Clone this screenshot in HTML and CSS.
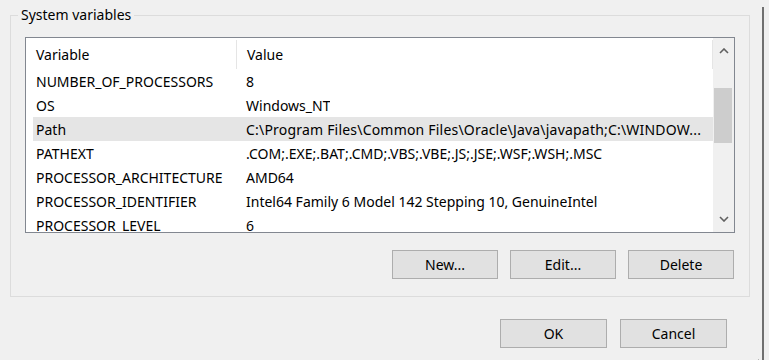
FILE: index.html
```html
<!DOCTYPE html>
<html lang="en">

<head>
    <meta charset="UTF-8">
    <title>Environment Variables</title>
    <link rel="stylesheet" href="styles.css">
</head>

<body>
    <div class="window">
        <fieldset class="group">
            <legend>System variables</legend>

            <div class="listbox">
                <div class="list-body">
                    <div class="list-header">
                        <div class="col col-name">Variable</div>
                        <div class="col col-value">Value</div>
                    </div>
                    <div class="row">
                        <div class="col col-name">NUMBER_OF_PROCESSORS</div>
                        <div class="col col-value">8</div>
                    </div>
                    <div class="row">
                        <div class="col col-name">OS</div>
                        <div class="col col-value">Windows_NT</div>
                    </div>
                    <div class="row selected">
                        <div class="col col-name">Path</div>
                        <div class="col col-value path-value">C:\Program Files\Common Files\Oracle\Java\javapath;C:\WINDOW...</div>
                    </div>
                    <div class="row">
                        <div class="col col-name">PATHEXT</div>
                        <div class="col col-value">.COM;.EXE;.BAT;.CMD;.VBS;.VBE;.JS;.JSE;.WSF;.WSH;.MSC</div>
                    </div>
                    <div class="row">
                        <div class="col col-name">PROCESSOR_ARCHITECTURE</div>
                        <div class="col col-value">AMD64</div>
                    </div>
                    <div class="row">
                        <div class="col col-name">PROCESSOR_IDENTIFIER</div>
                        <div class="col col-value">Intel64 Family 6 Model 142 Stepping 10, GenuineIntel</div>
                    </div>
                    <div class="row">
                        <div class="col col-name">PROCESSOR_LEVEL</div>
                        <div class="col col-value">6</div>
                    </div>
                </div>

                <div class="scrollbar">
                    <div class="arrow">
                        <svg width="10" height="6" viewBox="0 0 10 6"><path d="M1 5 L5 1 L9 5" fill="none" stroke="#606060" stroke-width="1.6"/></svg>
                    </div>
                    <div class="track">
                        <div class="thumb"></div>
                    </div>
                    <div class="arrow">
                        <svg width="10" height="6" viewBox="0 0 10 6"><path d="M1 1 L5 5 L9 1" fill="none" stroke="#606060" stroke-width="1.6"/></svg>
                    </div>
                </div>
            </div>

            <div class="actions">
                <button>New...</button>
                <button>Edit...</button>
                <button>Delete</button>
            </div>
        </fieldset>

        <div class="footer">
            <button>OK</button>
            <button>Cancel</button>
        </div>

        <svg class="grip" width="6" height="6" viewBox="0 0 6 6">
            <rect x="4" y="0" width="1" height="1" fill="#b5b5b5"/>
            <rect x="2" y="2" width="1" height="1" fill="#b5b5b5"/>
            <rect x="4" y="2" width="1" height="1" fill="#b5b5b5"/>
            <rect x="0" y="4" width="1" height="1" fill="#b5b5b5"/>
            <rect x="2" y="4" width="1" height="1" fill="#b5b5b5"/>
            <rect x="4" y="4" width="1" height="1" fill="#b5b5b5"/>
        </svg>
    </div>
</body>

</html>
```

FILE: styles.css
```css
body {
    margin: 0;
    background-color: #f0f0f0;
    font-family: "Segoe UI", "Noto Sans", "Open Sans", sans-serif;
    font-size: 14px;
    color: #000;
}

.window {
    position: relative;
    width: 762px;
    height: 360px;
    border-right: 2px solid #707070;
    background-color: #f0f0f0;
}

.group {
    margin: 7px 0 0 10px;
    padding: 14px 14px 17px 14px;
    width: 740px;
    box-sizing: border-box;
    border: 1px solid #dcdcdc;
}

.group legend {
    padding: 0 3px;
    margin-left: -7px;
    line-height: 16px;
}

.listbox {
    display: flex;
    height: 196px;
    border: 1px solid #828790;
    background-color: #fff;
    box-sizing: border-box;
}

.list-body {
    flex: 1;
    overflow: hidden;
    padding-left: 7px;
}

.list-header,
.row {
    display: flex;
    align-items: center;
    white-space: nowrap;
}

.list-header {
    height: 31px;
}

.list-header .col {
    align-self: stretch;
    display: flex;
    align-items: center;
}

.list-header .col-name {
    border-right: 1px solid #e5e5e5;
    margin-top: 2px;
}

.list-header .col-value {
    flex: 1;
    border-right: 1px solid #e5e5e5;
    margin-top: 2px;
}

.row {
    height: 24px;
}

.row.selected {
    background-color: #e5e5e5;
}

.col-name {
    width: 200px;
    padding-left: 3px;
    flex-shrink: 0;
}

.col-value {
    padding-left: 10px;
    overflow: hidden;
}

.path-value {
    letter-spacing: 0.2px;
}

.scrollbar {
    width: 21px;
    display: flex;
    flex-direction: column;
    background-color: #f0f0f0;
}

.arrow {
    height: 26px;
    display: flex;
    align-items: center;
    justify-content: center;
}

.track {
    flex: 1;
    padding-top: 24px;
}

.thumb {
    width: 18px;
    height: 55px;
    margin-left: 1px;
    background-color: #cdcdcd;
}

.actions {
    display: flex;
    justify-content: flex-end;
    gap: 12px;
    margin-top: 17px;
    padding-right: 1px;
}

button {
    width: 106px;
    height: 29px;
    padding: 0;
    font-family: inherit;
    font-size: 14px;
    color: #000;
    background-color: #e1e1e1;
    border: 1px solid #adadad;
}

.footer {
    display: flex;
    justify-content: flex-end;
    gap: 13px;
    margin-top: 22px;
    padding-right: 35px;
}

.footer button {
    width: 107px;
}

.grip {
    position: absolute;
    right: 2px;
    bottom: 2px;
}
```
